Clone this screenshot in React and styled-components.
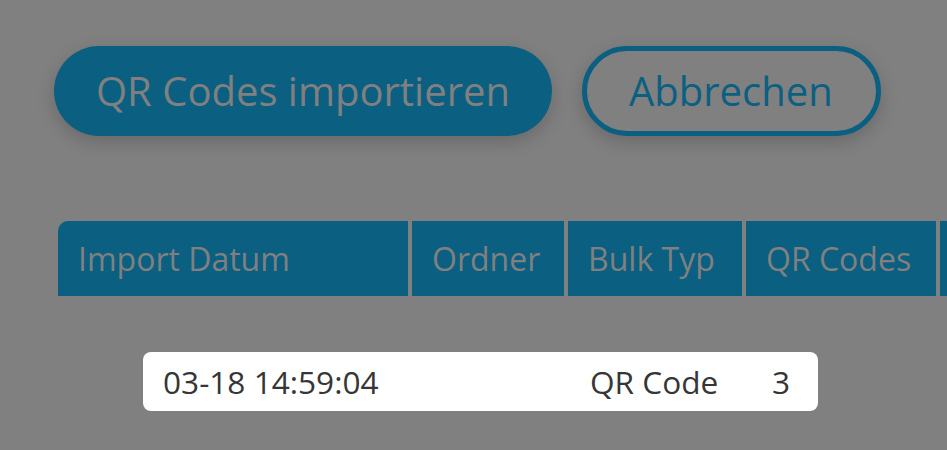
import React from "react";
import styled, { createGlobalStyle, css } from "styled-components";

const GlobalStyle = createGlobalStyle`
  html, body {
    margin: 0;
    padding: 0;
    background: #808080;
    font-family: "Open Sans", "Noto Sans", sans-serif;
    overflow: hidden;
  }
`;

const Page = styled.div`
  width: 947px;
  height: 450px;
  overflow: hidden;
  padding: 46px 0 0 54px;
  box-sizing: border-box;
`;

const Actions = styled.div`
  display: flex;
  gap: 30px;
`;

const PillButton = styled.button`
  height: 90px;
  padding: 0 42px;
  border-radius: 45px;
  font-family: inherit;
  font-size: 40px;
  font-weight: 400;
  line-height: 1;
  box-sizing: border-box;
  box-shadow: 0 6px 18px rgba(0, 0, 0, 0.18);
  cursor: pointer;
  white-space: nowrap;
  ${p => p.outline ? css`
    background: transparent;
    border: 5px solid #0b5f80;
    color: #0b5f80;
    padding: 0 43px 0 42px;
  ` : css`
    background: #0b5f80;
    border: none;
    color: #808080;
  `}
`;

const HeadRow = styled.div`
  display: flex;
  gap: 4px;
  margin: 85px 0 0 4px;
  width: max-content;
`;

const HeadCell = styled.div`
  flex: 0 0 ${p => p.w}px;
  height: 75px;
  display: flex;
  align-items: center;
  padding-left: 20px;
  box-sizing: border-box;
  background: #0b5f80;
  color: #808080;
  font-size: 32px;
  white-space: nowrap;
  &:first-child {
    border-top-left-radius: 10px;
  }
`;

const DataRow = styled.div`
  display: grid;
  grid-template-columns: 427px 182px auto;
  align-items: center;
  width: 675px;
  height: 59px;
  margin: 56px 0 0 89px;
  padding: 0 20px;
  box-sizing: border-box;
  background: #ffffff;
  border-radius: 8px;
  color: #363636;
  font-size: 31.6px;
  white-space: nowrap;
`;

// the last column runs past the right edge, only its border shows
const columns = [
  { key: "date", label: "Import Datum", w: 350 },
  { key: "folder", label: "Ordner", w: 152 },
  { key: "type", label: "Bulk Typ", w: 174 },
  { key: "codes", label: "QR Codes", w: 190 },
  { key: "actions", label: "", w: 200 },
];

export default function App() {
  return (
    <>
      <GlobalStyle />
      <Page>
        <Actions>
          <PillButton>QR Codes importieren</PillButton>
          <PillButton outline>Abbrechen</PillButton>
        </Actions>
        <HeadRow>
          {columns.map(c => (
            <HeadCell key={c.key} w={c.w}>{c.label}</HeadCell>
          ))}
        </HeadRow>
        <DataRow>
          <span>03-18 14:59:04</span>
          <span>QR Code</span>
          <span>3</span>
        </DataRow>
      </Page>
    </>
  );
}
